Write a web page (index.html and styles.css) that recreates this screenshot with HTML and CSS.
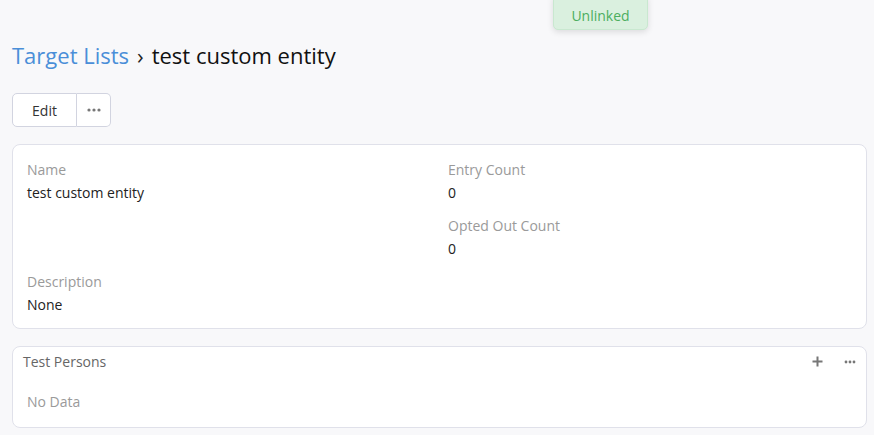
FILE: index.html
```html
<!DOCTYPE html>
<html>
<head>
<meta charset="utf-8">
<link rel="stylesheet" href="styles.css">
</head>
<body>
<div class="toast">Unlinked</div>
<div class="page">
  <h1 class="title"><a class="crumb">Target Lists</a><span class="sep">›</span><span>test custom entity</span></h1>
  <div class="btn-group">
    <button class="btn btn-edit">Edit</button>
    <button class="btn btn-more"><svg width="14" height="4" viewBox="0 0 14 4"><circle cx="2" cy="2" r="1.6"/><circle cx="7" cy="2" r="1.6"/><circle cx="12" cy="2" r="1.6"/></svg></button>
  </div>
  <div class="panel record">
    <div class="grid">
      <div class="cell">
        <div class="label">Name</div>
        <div class="value">test custom entity</div>
      </div>
      <div class="cell">
        <div class="label">Entry Count</div>
        <div class="value">0</div>
        <div class="label gap">Opted Out Count</div>
        <div class="value">0</div>
      </div>
      <div class="cell">
        <div class="label">Description</div>
        <div class="value">None</div>
      </div>
    </div>
  </div>
  <div class="panel rel">
    <div class="rel-head">
      <span class="rel-title">Test Persons</span>
      <div class="rel-actions">
        <svg width="11" height="11" viewBox="0 0 11 11"><path d="M5.5 0.5v10M0.5 5.5h10" stroke="#777" stroke-width="2"/></svg>
        <svg width="12" height="4" viewBox="0 0 12 4"><circle cx="2" cy="2" r="1.4"/><circle cx="6" cy="2" r="1.4"/><circle cx="10" cy="2" r="1.4"/></svg>
      </div>
    </div>
    <div class="rel-body">No Data</div>
  </div>
</div>
</body>
</html>
```
FILE: styles.css
```css
html, body { margin: 0; padding: 0; }
body {
  background: #f8f8fa;
  font-family: "Open Sans", "Noto Sans", sans-serif;
  font-size: 14px;
  color: #333;
  width: 874px;
  height: 435px;
  overflow: hidden;
  position: relative;
}
.toast {
  position: absolute;
  left: 553px;
  top: -4px;
  width: 95px;
  height: 34px;
  box-sizing: border-box;
  padding-top: 4px;
  background: #daf0df;
  border: 1px solid #c9e8d0;
  border-radius: 0 0 5px 5px;
  color: #4cae5e;
  font-size: 14px;
  display: flex;
  align-items: center;
  justify-content: center;
  box-shadow: 0 2px 6px rgba(0,0,0,0.12);
}
.page { padding: 36px 7px 0 12px; }
.title {
  margin: 0;
  font-weight: 400;
  font-size: 22px;
  line-height: 38px;
  color: #111;
  display: flex;
  align-items: center;
}
.crumb { color: #4a8ed8; }
.sep { margin: 0 8px 0 8px; color: #222; }
.btn-group { display: flex; margin-top: 19px; }
.btn {
  font-family: inherit;
  font-size: 14px;
  color: #333;
  background: #fff;
  border: 1px solid #d2d4e0;
  height: 34px;
  box-sizing: border-box;
  margin: 0;
  display: flex;
  align-items: center;
  justify-content: center;
}
.btn-edit { width: 65px; border-radius: 5px 0 0 5px; }
.btn-more { width: 34px; border-left: 0; border-radius: 0 5px 5px 0; fill: #777; }
.panel {
  background: #fff;
  border: 1px solid #e0e1ea;
  border-radius: 8px;
  box-sizing: border-box;
  width: 855px;
}
.record { margin-top: 17px; height: 185px; padding: 14px 14px 0 14px; }
.grid { display: grid; grid-template-columns: 421px 1fr; row-gap: 10px; }
.label { color: #9a9a9a; line-height: 22px; }
.value { color: #222; line-height: 24px; }
.label.gap { margin-top: 10px; }
.rel { margin-top: 17px; height: 82px; }
.rel-head {
  display: flex;
  justify-content: space-between;
  align-items: center;
  padding: 0 10px 0 10px;
  height: 29px;
}
.rel-title { color: #666; font-size: 14px; }
.rel-actions { display: flex; align-items: center; gap: 21px; fill: #777; }
.rel-body { color: #9a9a9a; padding: 16px 14px 0 14px; }
```
